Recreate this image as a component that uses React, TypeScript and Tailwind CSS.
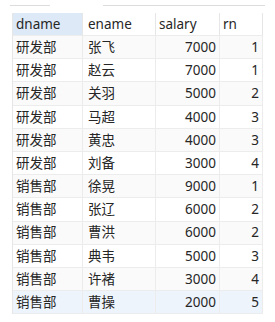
const rows: [string, string, number, number][] = [
  ["研发部", "张飞", 7000, 1],
  ["研发部", "赵云", 7000, 1],
  ["研发部", "关羽", 5000, 2],
  ["研发部", "马超", 4000, 3],
  ["研发部", "黄忠", 4000, 3],
  ["研发部", "刘备", 3000, 4],
  ["销售部", "徐晃", 9000, 1],
  ["销售部", "张辽", 6000, 2],
  ["销售部", "曹洪", 6000, 2],
  ["销售部", "典韦", 5000, 3],
  ["销售部", "许褚", 3000, 4],
  ["销售部", "曹操", 2000, 5],
];

function rowBg(i: number) {
  if (i === rows.length - 1) return "bg-[#eef4fb]";
  return i % 2 === 0 ? "bg-[#fafafa]" : "bg-white";
}

export default function App() {
  return (
    <div
      className="h-[322px] w-[275px] bg-white text-[13.5px] text-[#262626]"
      style={{ fontFamily: '"Noto Sans", "Noto Sans CJK SC", sans-serif' }}
    >
      {/* toolbar remnant */}
      <div className="flex h-[13px] items-start pt-[5px]">
        <div className="ml-[10px] h-px w-[40px] bg-[#dcdcdc]" />
        <div className="ml-[53px] h-px w-[162px] bg-[#dcdcdc]" />
      </div>

      <div className="ml-[12px] w-[251px] border-l border-[#e6e6e6]">
        <div className="flex h-[23px] items-center border-b border-[#ececec]">
          <div className="flex h-full w-[70px] items-center border-r border-[#e6e6e6] bg-[#dde9f6] pl-[3px]">
            dname
          </div>
          <div className="flex h-full w-[73px] items-center border-r border-[#e6e6e6] pl-[5px]">
            ename
          </div>
          <div className="flex h-full w-[64px] items-center border-r border-[#e6e6e6] pl-[3px]">
            salary
          </div>
          <div className="flex h-full w-[43px] items-center border-r border-[#e6e6e6] pl-[3px]">
            rn
          </div>
        </div>
        {rows.map(([d, e, s, r], i) => (
          <div
            key={i}
            className={`flex h-[23.2px] items-center border-b border-[#ececec] ${rowBg(i)}`}
          >
            <div className="flex h-full w-[70px] items-center border-r border-[#ececec] pl-[3px]">
              {d}
            </div>
            <div className="flex h-full w-[73px] items-center border-r border-[#ececec] pl-[5px]">
              {e}
            </div>
            <div className="flex h-full w-[64px] items-center justify-end border-r border-[#ececec] pr-[3px]">
              {s}
            </div>
            <div className="flex h-full w-[43px] items-center justify-end border-r border-[#ececec] pr-[3px]">
              {r}
            </div>
          </div>
        ))}
      </div>
    </div>
  );
}
